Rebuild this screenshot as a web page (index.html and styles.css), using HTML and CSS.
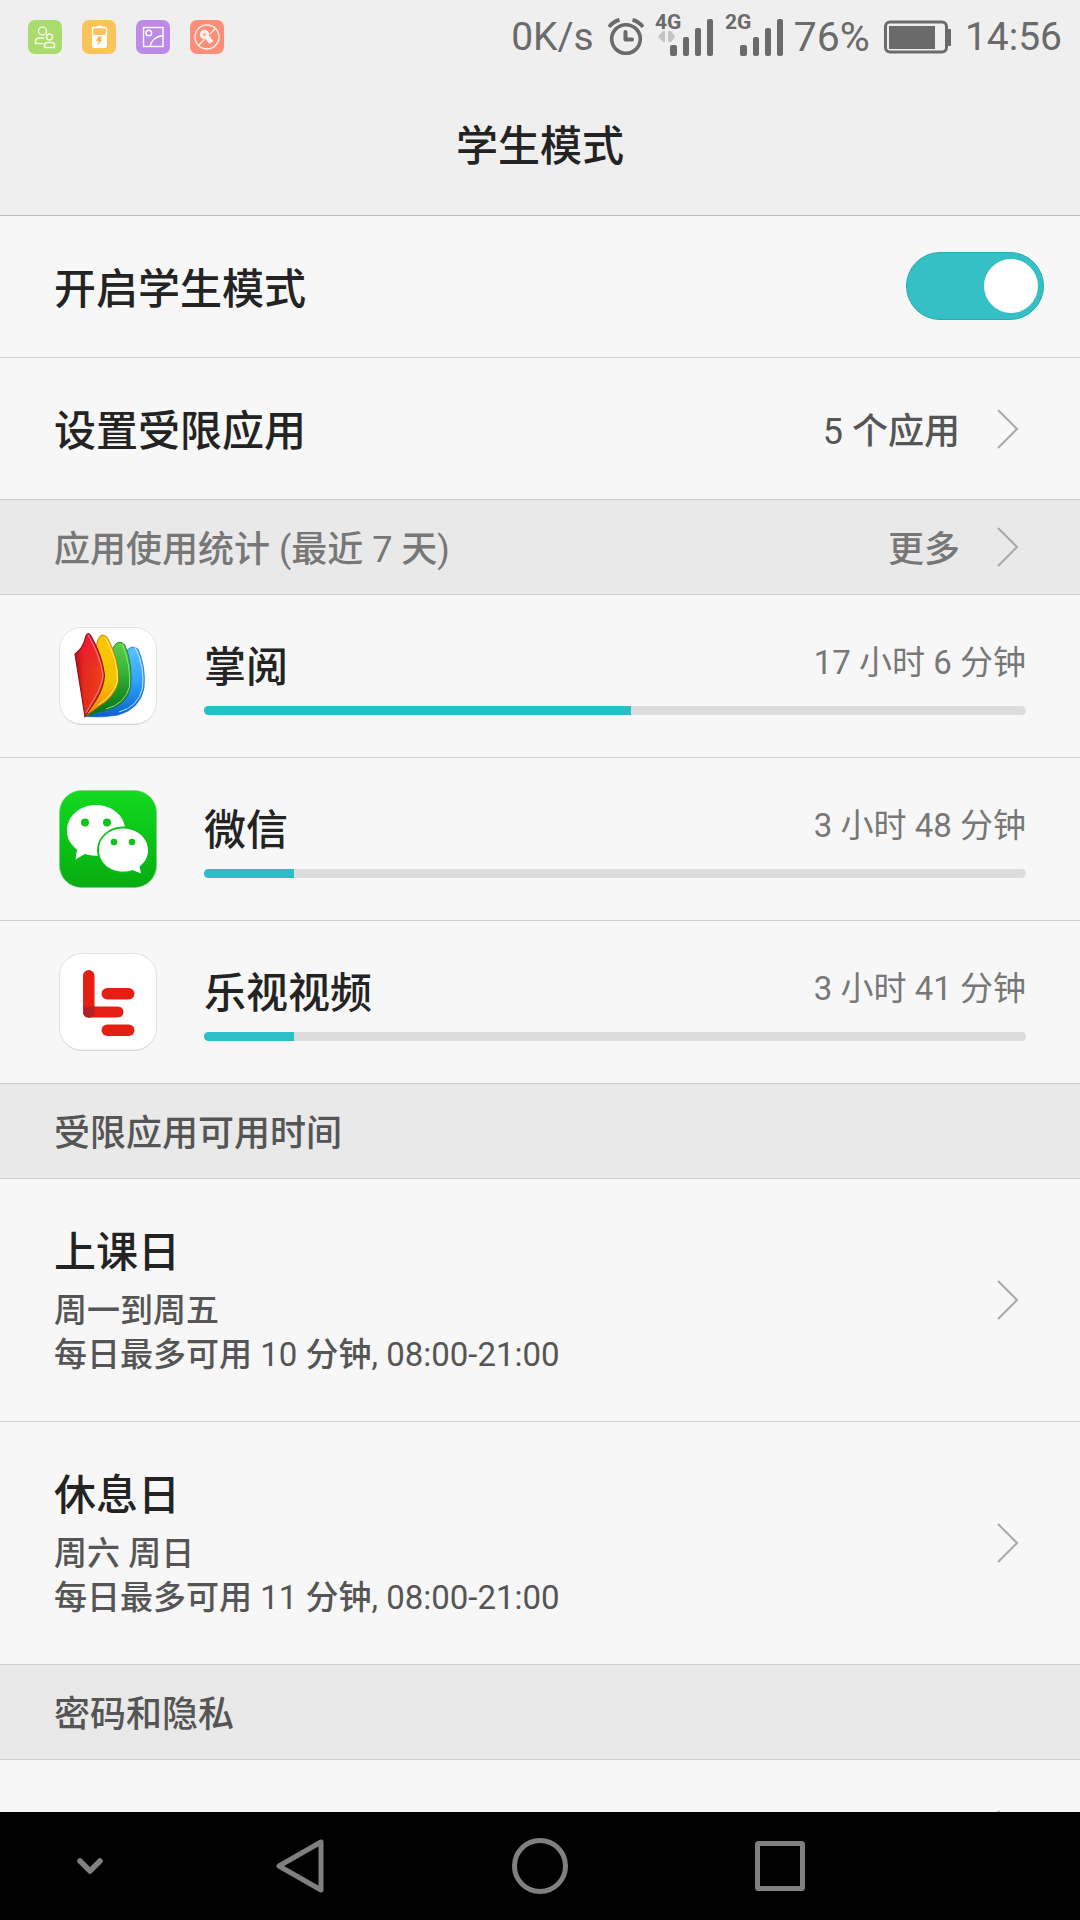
FILE: index.html
```html
<!DOCTYPE html>
<html lang="zh-CN">
<head>
<meta charset="utf-8">
<meta name="viewport" content="width=device-width, initial-scale=1">
<title>学生模式</title>
<link rel="stylesheet" href="styles.css">
</head>
<body>
<div class="screen">
  <div class="status">
    <div class="notices">
      <svg width="34" height="34" viewBox="0 0 34 34" fill="none" stroke="#f4fbe9" stroke-width="1.4"><rect width="34" height="34" rx="7" fill="#a9db6d" stroke="none"/><circle cx="14.500" cy="11" r="4"/><circle cx="21.500" cy="17" r="3"/><path d="M15.500 23.500H7.500v-2q0-3.500 4-3.500h5M16.500 27.500v-2q0-3 3-3h4q3 0 3 3v2z"/></svg>
      <svg width="34" height="34" viewBox="0 0 34 34"><rect width="34" height="34" rx="7" fill="#fbc45a"/><path d="M10.500 15V9.500q0-2 2-2h10q2 0 2 2V15M15 6.500h5" fill="none" stroke="#fff" stroke-width="1.4"/><path d="M10 15h15v11q0 2-2 2H12q-2 0-2-2z" fill="#fff"/><path d="M16.500 16.500h3.500l-1.500 3h2l-5 6 1.200-4.500H14z" fill="#fbb53a"/></svg>
      <svg width="34" height="34" viewBox="0 0 34 34" fill="none" stroke="#fff" stroke-width="1.4"><rect width="34" height="34" rx="7" fill="#bd8ae8" stroke="none"/><rect x="7.500" y="7.500" width="19.500" height="19"/><circle cx="12.800" cy="13" r="2.800"/><path d="M14 26.500Q16 17 27 15.500"/></svg>
      <svg width="34" height="34" viewBox="0 0 34 34" fill="none" stroke="#fff0ec" stroke-width="1.400"><rect width="34" height="34" rx="7" fill="#fc8d77" stroke="none"/><circle cx="17" cy="17" r="12"/><path d="M8.500 25.500l6-6M20 14l6-6"/><path d="M16 16l5.500 6.500" stroke-width="5"/><circle cx="14.500" cy="14.500" r="3" stroke-width="3.500"/></svg>
    </div>
    <div class="readings">
      <span>0K/s</span>
      <div class="network">
        <svg width="36" height="38" viewBox="0 0 36 38" fill="none" stroke="#6a6a6a"><circle cx="18" cy="21" r="14.300" stroke-width="3.600"/><path d="M17.500 14v7.500h6.500" stroke-width="4" stroke-linecap="round" stroke-linejoin="round"/><path d="M1 9Q5 3.500 11.500 1.800M35 9Q31 3.500 24.500 1.800" stroke-width="3.800"/></svg>
        <svg width="60" height="56" viewBox="0 -6 60 56" fill="#6a6a6a"><text class="net-type" x="1" y="14">4G</text><path d="M4 21.500l5-5.500h2v11h-2zM21 21.500l-4-5.500h-3v11h3z" fill="#c3c3c3"/><rect x="16" y="30" width="7" height="11" rx="2"/><rect x="29" y="22" width="6" height="19" rx="2"/><rect x="41" y="13" width="6" height="28" rx="2"/><rect x="53" y="4" width="6" height="37" rx="2"/></svg>
        <svg width="60" height="56" viewBox="0 -6 60 56" fill="#6a6a6a"><text class="net-type" x="1" y="14">2G</text><rect x="16" y="30" width="7" height="11" rx="2"/><rect x="29" y="22" width="6" height="19" rx="2"/><rect x="41" y="13" width="6" height="28" rx="2"/><rect x="53" y="4" width="6" height="37" rx="2"/></svg>
        <span class="charge">76%</span>
      </div>
      <svg width="67" height="34" viewBox="0 0 67 34"><rect x="1.500" y="2" width="61" height="30" rx="4.500" fill="none" stroke="#6a6a6a" stroke-width="3"/><rect x="5" y="6" width="46" height="23" fill="#6a6a6a"/><rect x="63" y="9" width="4" height="17" rx="1" fill="#6a6a6a"/></svg>
      <span>14:56</span>
    </div>
  </div>
  <header class="header"><h1 class="title">学生模式</h1></header>
  <main class="content">
    <div class="row">
      <label class="label" for="student-mode">开启学生模式</label>
      <input class="switch" id="student-mode" type="checkbox" role="switch" checked>
    </div>
    <a class="row" href="#apps">
      <span class="label">设置受限应用</span>
      <span class="value">5 个应用</span>
      <svg class="chevron" width="24" height="42" viewBox="0 0 24 42"><path d="M2 2l19 19L2 40"/></svg>
    </a>
    <div class="section muted">
      <h2 class="section-title">应用使用统计 (最近 7 天)</h2>
      <a class="more" href="#stats"><span class="section-title">更多</span>
        <svg class="chevron" width="24" height="42" viewBox="0 0 24 42"><path d="M2 2l19 19L2 40"/></svg>
      </a>
    </div>
    <div class="app">
      <svg class="app-icon" viewBox="0 0 98 98">
        <defs>
          <linearGradient id="red" x1="0" x2="1"><stop offset="0" stop-color="#a80812"/><stop offset=".3" stop-color="#e22b1c"/><stop offset="1" stop-color="#f2401c"/></linearGradient>
          <linearGradient id="redtop" x1="0" y1="0" x2="0" y2="1"><stop offset="0" stop-color="#f31540" stop-opacity=".9"/><stop offset=".45" stop-color="#f31540" stop-opacity="0"/></linearGradient>
          <linearGradient id="yellow" x1="0" y1="0" x2="0" y2="1"><stop offset="0" stop-color="#ffc400"/><stop offset=".6" stop-color="#efc400"/><stop offset="1" stop-color="#ff7a10"/></linearGradient>
          <linearGradient id="green" x1="0" y1="0" x2="0" y2="1"><stop offset="0" stop-color="#64c84a"/><stop offset=".3" stop-color="#3bbf3c"/><stop offset="1" stop-color="#046f12"/></linearGradient>
          <linearGradient id="blue" x1="0" y1="0" x2="0" y2="1"><stop offset="0" stop-color="#5cc2ff"/><stop offset=".5" stop-color="#2fa0fb"/><stop offset="1" stop-color="#0b60d0"/></linearGradient>
        </defs>
        <rect x="1" y="2" width="96" height="96" rx="22" fill="#c9c9c9"/><rect x=".5" y=".5" width="97" height="96.500" rx="22" fill="#fff" stroke="#e2e2e2"/>
        <path d="M67 25Q72 17 79 22Q87 40 85 61Q81 82 59 88Q43 91 26 89.500z" fill="url(#blue)" stroke="#1c6fc4" stroke-width=".8"/>
        <path d="M76 20Q86 40 83.500 61Q79 80 60 85" fill="none" stroke="#b9e4ff" stroke-width="1"/>
        <path d="M54 21Q59 11 66 18Q74 37 71.500 61Q67 80 44 84Q34 87 26 89.500z" fill="url(#green)" stroke="#187c22" stroke-width=".8"/>
        <path d="M63 17Q72 37 70.500 60Q66 77 47 82" fill="none" stroke="#8fe08a" stroke-width="1"/>
        <path d="M37 20Q40 3 48 10Q61 33 59.500 55Q56 70 39 80Q32 85 26 89.500z" fill="url(#yellow)" stroke="#c46a0c" stroke-width=".8"/>
        <path d="M46 10Q59 33 58.500 54Q54 69 39 78" fill="none" stroke="#fff17a" stroke-width="1"/>
        <path d="M16 27Q24 22 27 9Q29 4 32 9Q43 28 45.500 48Q45 60 37 73L26 89.500z" fill="url(#red)"/>
        <path d="M16 27Q24 22 27 9Q29 4 32 9Q43 28 45.500 48Q45 60 37 73L26 89.500z" fill="url(#redtop)" stroke="#94121a" stroke-width="1.200"/>
        <path d="M29 8Q41 28 44 48Q43 59 35 72L27 86" fill="none" stroke="#ff8f86" stroke-width=".9"/>
      </svg>
      <div class="usage">
        <div class="usage-head"><h3 class="label">掌阅</h3><span class="time">17 小时 6 分钟</span></div>
        <div class="bar"><div class="fill" style="width:52%"></div></div>
      </div>
    </div>
    <div class="app">
      <svg class="app-icon" viewBox="0 0 98 98">
        <defs><linearGradient id="chat" x1="0" y1="0" x2="0" y2="1"><stop offset="0" stop-color="#12da20"/><stop offset="1" stop-color="#06ad10"/></linearGradient></defs>
        <rect x=".5" y=".5" width="97" height="97" rx="22" fill="url(#chat)" stroke="#7fca83" stroke-width=".6"/>
        <path d="M37 15C21 15 8 26 8 41C8 49 12 55 18 59.500L16.500 69.500L26 64Q33 66.500 40 65.500L66 38C65 25 52 15 37 15z" fill="#fff"/>
        <ellipse cx="64" cy="60" rx="26" ry="23.500" fill="#0bc018"/>
        <path d="M64 38.500C50 38.500 40 48 40 60C40 72 50 81.500 64 81.500Q69 81.500 73.500 80L82 83.500L80.500 76.500C86 72 89 67 89 60C89 48 78 38.500 64 38.500z" fill="#fff"/>
        <g fill="#0cc41a"><circle cx="26" cy="32.500" r="4"/><circle cx="48" cy="32.500" r="4"/><circle cx="55" cy="52" r="3.300"/><circle cx="73" cy="52" r="3.300"/></g>
      </svg>
      <div class="usage">
        <div class="usage-head"><h3 class="label">微信</h3><span class="time">3 小时 48 分钟</span></div>
        <div class="bar"><div class="fill" style="width:11%"></div></div>
      </div>
    </div>
    <div class="app">
      <svg class="app-icon" viewBox="0 0 98 98">
        <rect x="1" y="2" width="96" height="96" rx="22" fill="#c9c9c9"/><rect x=".5" y=".5" width="97" height="96.500" rx="22" fill="#fff" stroke="#e2e2e2"/>
        <g fill="#e51f13"><rect x="24" y="17" width="11.500" height="47.500" rx="5.700"/><rect x="24" y="53.500" width="40.500" height="11" rx="5.500"/><rect x="42.500" y="35" width="33" height="11.500" rx="5.700"/><rect x="42.500" y="71.500" width="33" height="11.500" rx="5.700"/></g>
        <path d="M24.500 59Q24.500 53.500 30 53.500h5.500V59Q35.500 64.500 30 64.500T24.500 59z" fill="#b32025"/>
      </svg>
      <div class="usage">
        <div class="usage-head"><h3 class="label">乐视视频</h3><span class="time">3 小时 41 分钟</span></div>
        <div class="bar"><div class="fill" style="width:11%"></div></div>
      </div>
    </div>
    <div class="section"><h2 class="section-title">受限应用可用时间</h2></div>
    <a class="row day" href="#weekday">
      <span class="day-text"><span class="day-name">上课日</span><span class="detail">周一到周五<br>每日最多可用 10 分钟, 08:00-21:00</span></span>
      <svg class="chevron" width="24" height="42" viewBox="0 0 24 42"><path d="M2 2l19 19L2 40"/></svg>
    </a>
    <a class="row day" href="#weekend">
      <span class="day-text"><span class="day-name">休息日</span><span class="detail">周六 周日<br>每日最多可用 11 分钟, 08:00-21:00</span></span>
      <svg class="chevron" width="24" height="42" viewBox="0 0 24 42"><path d="M2 2l19 19L2 40"/></svg>
    </a>
    <div class="section"><h2 class="section-title">密码和隐私</h2></div>
    <a class="row last" href="#password" aria-label="密码">
      <svg class="chevron" width="24" height="42" viewBox="0 0 24 42"><path d="M2 2l19 19L2 40"/></svg>
    </a>
  </main>
  <nav class="nav">
    <button class="nav-button" type="button" aria-label="收起"><svg width="28" height="20" viewBox="0 0 28 20"><path d="M4 5l10 10L24 5" stroke-width="5.500"/></svg></button>
    <button class="nav-button" type="button" aria-label="返回"><svg width="50" height="56" viewBox="0 0 50 56"><path d="M46 4v48L4 28z"/></svg></button>
    <button class="nav-button" type="button" aria-label="主屏幕"><svg width="56" height="56" viewBox="0 0 56 56"><circle cx="28" cy="28" r="25.500"/></svg></button>
    <button class="nav-button" type="button" aria-label="最近任务"><svg width="50" height="50" viewBox="0 0 50 50"><rect x="2.500" y="2.500" width="45" height="45" rx="1"/></svg></button>
  </nav>
</div>
</body>
</html>
```

FILE: styles.css
```css
* { box-sizing: border-box; }

body {
  margin: 0;
  background: #f7f7f7;
  color: #232323;
  font-family: Roboto, "Noto Sans CJK SC", sans-serif;
}

h1, h2, h3 { margin: 0; font-weight: 400; }
a { color: inherit; text-decoration: none; }
svg { display: block; flex: none; }

.screen {
  display: flex;
  flex-direction: column;
  height: 100vh;
  overflow: hidden;
}

.status {
  display: flex;
  flex: none;
  justify-content: space-between;
  align-items: center;
  height: 74px;
  padding: 0 18px 0 28px;
  background: #efefef;
  color: #6a6a6a;
  font-size: 39px;
  line-height: 44px;
}

.notices { display: flex; gap: 20px; }
.readings { display: flex; align-items: center; gap: 14px; }
.network { display: flex; align-items: center; gap: 10px; }
.charge { font-size: 41px; }
.net-type { font-size: 21px; font-weight: 700; }

.header {
  display: flex;
  flex: none;
  align-items: center;
  justify-content: center;
  height: 142px;
  padding-top: 4px;
  background: #efefef;
  border-bottom: 1px solid #bdbdbd;
}

.title, .label, .day-name {
  font-size: 42px;
  font-weight: 500;
  line-height: 56px;
}

.content { flex: 1; min-height: 0; overflow: hidden; }

.row {
  display: flex;
  align-items: center;
  height: 142px;
  padding: 0 60px 0 54px;
  border-bottom: 1px solid #cfcfcf;
}

.label { flex: 1; }
.value { color: #555; font-size: 36px; line-height: 48px; }
.row > .label, .value, .section-title { padding-top: 6px; }

/* Regular Latin digits beside medium Chinese characters */
.value, .section-title, .detail {
  font-family: Roboto, "Noto Sans CJK SC Medium", "Noto Sans CJK SC", sans-serif;
  font-weight: 400;
}

.chevron {
  margin-left: 36px;
  fill: none;
  stroke: #aaa;
  stroke-width: 2;
}

.switch {
  appearance: none;
  display: flex;
  justify-content: flex-end;
  align-items: center;
  width: 138px;
  height: 68px;
  margin: 0 -24px 2px 0;
  padding-right: 5px;
  border: 1px solid #27adb2;
  border-radius: 34px;
  background: #35c0c6;
}

.switch::before {
  content: "";
  width: 54px;
  height: 54px;
  border-radius: 50%;
  background: #fff;
}

.switch:not(:checked) {
  justify-content: flex-start;
  padding-left: 5px;
  border-color: #bbb;
  background: #ccc;
}

.section {
  display: flex;
  align-items: center;
  justify-content: space-between;
  height: 95px;
  padding: 0 60px 0 54px;
  background: #e9e9e9;
  border-bottom: 1px solid #cfcfcf;
  color: #555;
}

.section-title { font-size: 36px; line-height: 48px; }
.muted { color: #777; }
.more { display: flex; align-items: center; }

.app {
  display: flex;
  align-items: center;
  gap: 47px;
  height: 163px;
  padding: 0 54px 0 59px;
  border-bottom: 1px solid #cfcfcf;
}

.app-icon { width: 98px; height: 98px; }
.usage { flex: 1; padding-top: 2px; }
.usage-head { display: flex; align-items: flex-start; margin-bottom: 10px; }
.time { color: #777; font-size: 33px; line-height: 46px; }

.bar {
  height: 9px;
  overflow: hidden;
  border-radius: 5px;
  background: #dcdcdc;
}

.fill { height: 100%; background: #2abfc7; }

.day { height: 243px; }
.day-text { display: flex; flex: 1; flex-direction: column; gap: 8px; padding-top: 2px; }
.detail { color: #555; font-size: 33px; line-height: 44px; }
.last { justify-content: flex-end; height: 140px; }

.nav {
  display: grid;
  flex: none;
  grid-template-columns: 3fr 4fr 4fr 4fr 3fr;
  height: 108px;
  background: #000;
}

.nav-button {
  display: flex;
  align-items: center;
  justify-content: center;
  padding: 0;
  border: 0;
  background: none;
  fill: none;
  stroke: #808080;
  stroke-width: 5;
  stroke-linecap: round;
  stroke-linejoin: round;
}
```
